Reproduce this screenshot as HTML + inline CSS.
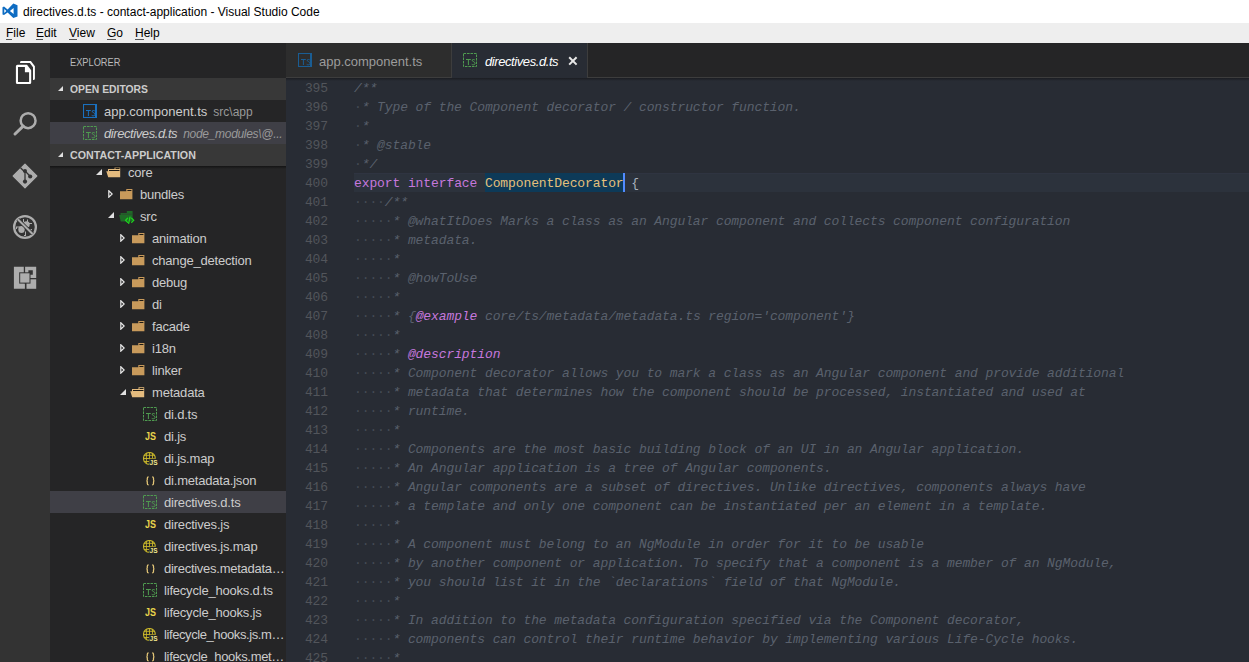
<!DOCTYPE html>
<html><head><meta charset="utf-8"><style>
*{margin:0;padding:0;box-sizing:border-box}
html,body{width:1249px;height:662px;overflow:hidden;background:#282c34;font-family:"Liberation Sans",sans-serif}
.abs{position:absolute}
#title{position:absolute;left:0;top:0;width:1249px;height:23px;background:#fff}
#title .t{position:absolute;left:23px;top:5px;font-size:12px;line-height:15px;color:#000;white-space:pre}
#menu{position:absolute;left:0;top:23px;width:1249px;height:20px;background:#eeeeee}
#menu span{position:absolute;top:3px;font-size:12px;line-height:15px;color:#000;white-space:pre}
#menu u{text-decoration:none}
#menu i{position:absolute;top:16px;height:1px;background:#555}
#act{position:absolute;left:0;top:43px;width:50px;height:619px;background:#333333}
#side{position:absolute;left:50px;top:43px;width:236px;height:619px;background:#252526;overflow:hidden}
#side .hdr{position:absolute;left:20px;top:13px;font-size:11px;color:#bbbbbb;transform:scaleX(0.84);transform-origin:0 0;white-space:pre}
.sec{position:absolute;left:0;width:236px;height:22px;background:#383838}
.sec .tri{position:absolute;left:7.6px;top:7.5px;width:0;height:0;border-left:5.6px solid transparent;border-bottom:5.6px solid #e0e0e0}
.sec .lbl{position:absolute;left:20px;top:5px;font-size:11px;font-weight:bold;color:#cccccc;transform:scaleX(0.94);transform-origin:0 0;white-space:pre}
.row{position:absolute;left:0;width:236px;height:22px;white-space:pre;overflow:hidden}
.row .nm{position:absolute;top:4px;font-size:13px;line-height:16px;color:#cccccc}
.row .ds{font-size:12px;color:#999999;margin-left:6px}
.sel{background:#3f3f46}
#tabs{position:absolute;left:286px;top:43px;width:963px;height:35px;background:#252526}
.tab{position:absolute;top:0;height:35px}
.tab .nm{position:absolute;top:11px;font-size:13px;line-height:16px;white-space:pre}
#ed{position:absolute;left:286px;top:78px;width:963px;height:584px;background:#282c34;overflow:hidden}
.num{position:absolute;left:0;width:42px;height:20px;padding-top:1px;text-align:right;font-family:"Liberation Mono",monospace;font-size:13px;line-height:19px;color:#52555b;letter-spacing:-0.1px}
.ln{position:absolute;left:68px;right:0;height:20px;padding-top:1px;font-family:"Liberation Mono",monospace;font-size:13px;line-height:19px;letter-spacing:-0.1px;white-space:pre;color:#abb2bf}
.cl{background:#2c323c;border-top:1px solid #2f3441}
.ws{color:#454b55}
.c{color:#5a616d;font-style:italic}
.k{color:#c678dd}
.hlt{color:#e5c07b}
.br{color:#abb2bf}
.tag{color:#c678dd;font-style:italic}
.cur{display:inline-block;width:2px;height:19px;background:#528bff;vertical-align:top;margin-left:-1px;margin-right:-1px}
#tree{position:absolute;left:0;top:123px;width:236px;height:496px;overflow:hidden}
.tn{white-space:nowrap}
.it{font-style:italic;letter-spacing:-0.42px}
.tn{letter-spacing:-0.2px}
#edshadow{position:absolute;left:286px;top:78px;width:963px;height:3px;background:linear-gradient(#1b1d22,rgba(40,44,52,0))}

</style></head><body>
<div id="title">
  <svg class="abs" style="left:0;top:0" width="22" height="22" viewBox="0 0 22 22"><path d="M13.3 3.6L17.5 5.3V16.5L13.3 18.1L7.6 12.6L4 15.1L2.5 14.4V7.2L4 6.6L7.6 9.4ZM13.6 7.9V14.1L9.9 11ZM4.3 8.9V13.1L6.3 11Z" fill="#0e6cc2" fill-rule="evenodd"/></svg>
  <div class="t">directives.d.ts - contact-application - Visual Studio Code</div>
</div>
<div id="menu">
  <span style="left:6px"><u>F</u>ile</span>
  <span style="left:36px"><u>E</u>dit</span>
  <span style="left:69px"><u>V</u>iew</span>
  <span style="left:107px"><u>G</u>o</span>
  <span style="left:135px"><u>H</u>elp</span>
  <i style="left:6px;width:6px"></i><i style="left:36px;width:7px"></i><i style="left:69px;width:8px"></i><i style="left:107px;width:9px"></i><i style="left:135px;width:9px"></i>
</div>
<div id="act"><svg class="abs" style="left:0;top:-43px" width="50" height="300" viewBox="0 0 50 300">
<path d="M17.5 64.8H27L31.2 70.2V82.6Q31.2 84.1 29.7 84.1H17.4Q15.9 84.1 15.9 82.6V66.3Q15.9 64.8 17.5 64.8ZM18 67V82H29.1V72.3H24.9V67Z" fill="#ffffff" fill-rule="evenodd"/>
<path d="M21 61H30.9L34.9 66.3V78.4Q34.9 79.9 33.4 79.9H33V67.2L29.9 63.1H20Q20 61 21 61Z" fill="#ffffff"/>
<circle cx="28.1" cy="120.7" r="7.45" fill="none" stroke="#adadad" stroke-width="2.5"/>
<path d="M23.2 126.1L15 134" stroke="#adadad" stroke-width="3" stroke-linecap="round"/>
<path d="M25 164.2L36.8 176L25 187.8L13.2 176Z" fill="#adadad" stroke="#adadad" stroke-width="1.2" stroke-linejoin="round"/>
<path d="M20.5 167.8L25 172.2V181.5M25 171L30.2 176.3" stroke="#333333" stroke-width="1.3" fill="none"/>
<circle cx="25" cy="171" r="2" fill="#333333"/><circle cx="30.2" cy="176.5" r="2.1" fill="#333333"/><circle cx="25" cy="181.6" r="2.1" fill="#333333"/>
<circle cx="25" cy="227" r="10.9" fill="none" stroke="#adadad" stroke-width="2.3"/>
<g fill="#adadad"><ellipse cx="21.5" cy="229.5" rx="3.2" ry="3.5"/><ellipse cx="26.5" cy="224.5" rx="3.2" ry="3.3"/>
<path d="M16 226.5H20.5V227.5H17V229H16ZM23 219H24V222.5H23ZM27 219.5H28V222H27ZM29 223H32V224H29ZM29 229H32V230.5H29ZM25 231.5H26V236H24V235H25Z"/></g>
<path d="M17.8 219.2L32.6 234" stroke="#333333" stroke-width="3.6"/>
<path d="M17.8 219.2L32.6 234" stroke="#adadad" stroke-width="2"/>
<path d="M13.9 266.8H23.8V283.2H24.9V288.8H13.9Z" fill="#adadad"/>
<path d="M25.1 266.8H36.2V278H25.1ZM28.4 270.3V274.7H32.8V270.3Z" fill="#adadad" fill-rule="evenodd"/>
<rect x="26.5" y="279.3" width="9.7" height="9.5" fill="#adadad"/>
<rect x="19.2" y="272.3" width="11.3" height="11.3" fill="#333333"/>
<rect x="20.2" y="273.3" width="9.3" height="9.3" fill="#adadad"/>
</svg></div>
<div id="side">
  <div class="hdr">EXPLORER</div>
  <div class="sec" style="top:35px"><div class="tri"></div><div class="lbl">OPEN EDITORS</div></div>
  <div class="row" style="top:57px"><svg class="abs" style="left:33px;top:4px" width="14" height="14" viewBox="0 0 14 14"><rect x="0.5" y="0.5" width="13" height="13" fill="none" stroke="#1a70be" stroke-width="1.1"/><rect x="12" y="1" width="1" height="12" fill="#1a70be"/><path d="M3 6.5H7.8M5.4 6.5V12" stroke="#1a70be" stroke-width="1" fill="none"/><path d="M11.9 7.1C11.3 6.4 9.6 6.2 9.1 7.1 8.5 8.3 12.2 8.7 12.1 10.3 12 12.2 9.4 12 8.7 11.3" stroke="#1a70be" stroke-width="1" fill="none"/></svg><span class="nm" style="left:54px">app.component.ts<span class="ds">src\app</span></span></div>
  <div class="row sel" style="top:79px"><svg class="abs" style="left:33px;top:4px" width="14" height="14" viewBox="0 0 14 14"><rect x="0.5" y="0.5" width="13" height="13" fill="none" stroke="#4f9b50" stroke-width="1" stroke-dasharray="2.6 0.9"/><path d="M3 6.5H7.8M5.4 6.5V12" stroke="#4f9b50" stroke-width="1" fill="none"/><path d="M11.9 7.1C11.3 6.4 9.6 6.2 9.1 7.1 8.5 8.3 12.2 8.7 12.1 10.3 12 12.2 9.4 12 8.7 11.3" stroke="#4f9b50" stroke-width="1" fill="none"/></svg><span class="nm" style="left:54px"><span class="it">directives.d.ts</span><span class="ds it" style="letter-spacing:-0.3px">node_modules\@...</span></span></div>
  <div class="sec" style="top:101px"><div class="tri"></div><div class="lbl" style="transform:scaleX(0.97)">CONTACT-APPLICATION</div></div>
  <div id="tree">
<div class="row" style="top:-5px"><svg class="abs" style="left:46px;top:7.6px" width="6" height="6" viewBox="0 0 6 6"><path d="M6 0V6H0Z" fill="#e0e0e0"/></svg><svg class="abs" style="left:56px;top:6px" width="15" height="11" viewBox="0 0 15 11"><path d="M2 2H8.5V0.2H14.2V10.3H2.2L0.3 4.3H2Z" fill="#e4bb7e"/><rect x="9.5" y="1" width="4" height="1" fill="#2a2418"/><rect x="3" y="3" width="10.5" height="1" fill="#1c1a16"/></svg><span class="nm tn" style="left:78px">core</span></div>
<div class="row" style="top:17px"><svg class="abs" style="left:58px;top:7px" width="5" height="8" viewBox="0 0 5 8"><path d="M0.8 0.8L4.2 4L0.8 7.2Z" fill="none" stroke="#e8e8e8" stroke-width="1.2"/></svg><svg class="abs" style="left:70px;top:6px" width="13" height="11" viewBox="0 0 13 11"><path d="M0 2.3H6.3V0H12.4V10.2H0Z" fill="#c89a5b"/><rect x="7.4" y="1" width="4" height="1" fill="#1e1a14"/></svg><span class="nm tn" style="left:90px">bundles</span></div>
<div class="row" style="top:39px"><svg class="abs" style="left:58px;top:7.3px" width="6" height="6" viewBox="0 0 6 6"><path d="M6 0V6H0Z" fill="#e0e0e0"/></svg><svg class="abs" style="left:68.6px;top:6px" width="17" height="14" viewBox="0 0 17 14"><path d="M1.6 1.9H7.8V0.1H13.6V10.6H1.8L0.1 3.9H1.6Z" fill="#1f6a27"/><rect x="2.5" y="2.7" width="10.4" height="0.9" fill="#2c4a2e"/><path d="M8.6 7.2L6.6 9.3L8.6 11.4M12.7 7.2L14.7 9.3L12.7 11.4M11 6.1L9.7 12.3" stroke="#1ed41e" stroke-width="1.3" fill="none" stroke-linecap="round"/></svg><span class="nm tn" style="left:90px">src</span></div>
<div class="row" style="top:61px"><svg class="abs" style="left:70px;top:7px" width="5" height="8" viewBox="0 0 5 8"><path d="M0.8 0.8L4.2 4L0.8 7.2Z" fill="none" stroke="#e8e8e8" stroke-width="1.2"/></svg><svg class="abs" style="left:82px;top:6px" width="13" height="11" viewBox="0 0 13 11"><path d="M0 2.3H6.3V0H12.4V10.2H0Z" fill="#c89a5b"/><rect x="7.4" y="1" width="4" height="1" fill="#1e1a14"/></svg><span class="nm tn" style="left:102px">animation</span></div>
<div class="row" style="top:83px"><svg class="abs" style="left:70px;top:7px" width="5" height="8" viewBox="0 0 5 8"><path d="M0.8 0.8L4.2 4L0.8 7.2Z" fill="none" stroke="#e8e8e8" stroke-width="1.2"/></svg><svg class="abs" style="left:82px;top:6px" width="13" height="11" viewBox="0 0 13 11"><path d="M0 2.3H6.3V0H12.4V10.2H0Z" fill="#c89a5b"/><rect x="7.4" y="1" width="4" height="1" fill="#1e1a14"/></svg><span class="nm tn" style="left:102px">change_detection</span></div>
<div class="row" style="top:105px"><svg class="abs" style="left:70px;top:7px" width="5" height="8" viewBox="0 0 5 8"><path d="M0.8 0.8L4.2 4L0.8 7.2Z" fill="none" stroke="#e8e8e8" stroke-width="1.2"/></svg><svg class="abs" style="left:82px;top:6px" width="13" height="11" viewBox="0 0 13 11"><path d="M0 2.3H6.3V0H12.4V10.2H0Z" fill="#c89a5b"/><rect x="7.4" y="1" width="4" height="1" fill="#1e1a14"/></svg><span class="nm tn" style="left:102px">debug</span></div>
<div class="row" style="top:127px"><svg class="abs" style="left:70px;top:7px" width="5" height="8" viewBox="0 0 5 8"><path d="M0.8 0.8L4.2 4L0.8 7.2Z" fill="none" stroke="#e8e8e8" stroke-width="1.2"/></svg><svg class="abs" style="left:82px;top:6px" width="13" height="11" viewBox="0 0 13 11"><path d="M0 2.3H6.3V0H12.4V10.2H0Z" fill="#c89a5b"/><rect x="7.4" y="1" width="4" height="1" fill="#1e1a14"/></svg><span class="nm tn" style="left:102px">di</span></div>
<div class="row" style="top:149px"><svg class="abs" style="left:70px;top:7px" width="5" height="8" viewBox="0 0 5 8"><path d="M0.8 0.8L4.2 4L0.8 7.2Z" fill="none" stroke="#e8e8e8" stroke-width="1.2"/></svg><svg class="abs" style="left:82px;top:6px" width="13" height="11" viewBox="0 0 13 11"><path d="M0 2.3H6.3V0H12.4V10.2H0Z" fill="#c89a5b"/><rect x="7.4" y="1" width="4" height="1" fill="#1e1a14"/></svg><span class="nm tn" style="left:102px">facade</span></div>
<div class="row" style="top:171px"><svg class="abs" style="left:70px;top:7px" width="5" height="8" viewBox="0 0 5 8"><path d="M0.8 0.8L4.2 4L0.8 7.2Z" fill="none" stroke="#e8e8e8" stroke-width="1.2"/></svg><svg class="abs" style="left:82px;top:6px" width="13" height="11" viewBox="0 0 13 11"><path d="M0 2.3H6.3V0H12.4V10.2H0Z" fill="#c89a5b"/><rect x="7.4" y="1" width="4" height="1" fill="#1e1a14"/></svg><span class="nm tn" style="left:102px">i18n</span></div>
<div class="row" style="top:193px"><svg class="abs" style="left:70px;top:7px" width="5" height="8" viewBox="0 0 5 8"><path d="M0.8 0.8L4.2 4L0.8 7.2Z" fill="none" stroke="#e8e8e8" stroke-width="1.2"/></svg><svg class="abs" style="left:82px;top:6px" width="13" height="11" viewBox="0 0 13 11"><path d="M0 2.3H6.3V0H12.4V10.2H0Z" fill="#c89a5b"/><rect x="7.4" y="1" width="4" height="1" fill="#1e1a14"/></svg><span class="nm tn" style="left:102px">linker</span></div>
<div class="row" style="top:215px"><svg class="abs" style="left:70px;top:7.6px" width="6" height="6" viewBox="0 0 6 6"><path d="M6 0V6H0Z" fill="#e0e0e0"/></svg><svg class="abs" style="left:80px;top:6px" width="15" height="11" viewBox="0 0 15 11"><path d="M2 2H8.5V0.2H14.2V10.3H2.2L0.3 4.3H2Z" fill="#e4bb7e"/><rect x="9.5" y="1" width="4" height="1" fill="#2a2418"/><rect x="3" y="3" width="10.5" height="1" fill="#1c1a16"/></svg><span class="nm tn" style="left:102px">metadata</span></div>
<div class="row" style="top:237px"><svg class="abs" style="left:93px;top:4px" width="14" height="14" viewBox="0 0 14 14"><rect x="0.5" y="0.5" width="13" height="13" fill="none" stroke="#4f9b50" stroke-width="1" stroke-dasharray="2.6 0.9"/><path d="M3 6.5H7.8M5.4 6.5V12" stroke="#4f9b50" stroke-width="1" fill="none"/><path d="M11.9 7.1C11.3 6.4 9.6 6.2 9.1 7.1 8.5 8.3 12.2 8.7 12.1 10.3 12 12.2 9.4 12 8.7 11.3" stroke="#4f9b50" stroke-width="1" fill="none"/></svg><span class="nm tn" style="left:114px">di.d.ts</span></div>
<div class="row" style="top:259px"><svg class="abs" style="left:94.8px;top:7px" width="12" height="8" viewBox="0 0 12 8"><text x="0" y="7.6" font-family="Liberation Sans" font-weight="bold" font-size="10.2" fill="#e9d44c" textLength="11" lengthAdjust="spacingAndGlyphs">JS</text></svg><span class="nm tn" style="left:114px">di.js</span></div>
<div class="row" style="top:281px"><svg class="abs" style="left:93.2px;top:5px" width="16" height="14" viewBox="0 0 16 14"><circle cx="6.4" cy="6.4" r="5.9" fill="none" stroke="#c9b72a" stroke-width="1.1"/><path d="M3.4 1.2V11.6M6.5 0.6V12.2M9.5 1.2V11.6M0.8 3.3H12M0.5 6.5H12.3M0.8 9.5H12" stroke="#c9b72a" stroke-width="0.9"/><rect x="6.2" y="6.8" width="9" height="7.2" rx="1" fill="#252526"/><text x="6.6" y="13.2" font-family="Liberation Sans" font-weight="bold" font-size="7.6" fill="#f3e88e" textLength="8" lengthAdjust="spacingAndGlyphs">JS</text></svg><span class="nm tn" style="left:114px">di.js.map</span></div>
<div class="row" style="top:303px"><svg class="abs" style="left:95.5px;top:7px" width="10" height="11" viewBox="0 0 10 11"><path d="M2.6 0.8Q1.3 0.8 1.3 2.2V3.6Q1.3 4.8 0.4 4.8Q1.3 4.8 1.3 6V7.4Q1.3 8.8 2.6 8.8M6.2 0.8Q7.5 0.8 7.5 2.2V3.6Q7.5 4.8 8.4 4.8Q7.5 4.8 7.5 6V7.4Q7.5 8.8 6.2 8.8" fill="none" stroke="#e6c878" stroke-width="1.25"/></svg><span class="nm tn" style="left:114px">di.metadata.json</span></div>
<div class="row sel" style="top:325px"><svg class="abs" style="left:93px;top:4px" width="14" height="14" viewBox="0 0 14 14"><rect x="0.5" y="0.5" width="13" height="13" fill="none" stroke="#4f9b50" stroke-width="1" stroke-dasharray="2.6 0.9"/><path d="M3 6.5H7.8M5.4 6.5V12" stroke="#4f9b50" stroke-width="1" fill="none"/><path d="M11.9 7.1C11.3 6.4 9.6 6.2 9.1 7.1 8.5 8.3 12.2 8.7 12.1 10.3 12 12.2 9.4 12 8.7 11.3" stroke="#4f9b50" stroke-width="1" fill="none"/></svg><span class="nm tn" style="left:114px">directives.d.ts</span></div>
<div class="row" style="top:347px"><svg class="abs" style="left:94.8px;top:7px" width="12" height="8" viewBox="0 0 12 8"><text x="0" y="7.6" font-family="Liberation Sans" font-weight="bold" font-size="10.2" fill="#e9d44c" textLength="11" lengthAdjust="spacingAndGlyphs">JS</text></svg><span class="nm tn" style="left:114px">directives.js</span></div>
<div class="row" style="top:369px"><svg class="abs" style="left:93.2px;top:5px" width="16" height="14" viewBox="0 0 16 14"><circle cx="6.4" cy="6.4" r="5.9" fill="none" stroke="#c9b72a" stroke-width="1.1"/><path d="M3.4 1.2V11.6M6.5 0.6V12.2M9.5 1.2V11.6M0.8 3.3H12M0.5 6.5H12.3M0.8 9.5H12" stroke="#c9b72a" stroke-width="0.9"/><rect x="6.2" y="6.8" width="9" height="7.2" rx="1" fill="#252526"/><text x="6.6" y="13.2" font-family="Liberation Sans" font-weight="bold" font-size="7.6" fill="#f3e88e" textLength="8" lengthAdjust="spacingAndGlyphs">JS</text></svg><span class="nm tn" style="left:114px">directives.js.map</span></div>
<div class="row" style="top:391px"><svg class="abs" style="left:95.5px;top:7px" width="10" height="11" viewBox="0 0 10 11"><path d="M2.6 0.8Q1.3 0.8 1.3 2.2V3.6Q1.3 4.8 0.4 4.8Q1.3 4.8 1.3 6V7.4Q1.3 8.8 2.6 8.8M6.2 0.8Q7.5 0.8 7.5 2.2V3.6Q7.5 4.8 8.4 4.8Q7.5 4.8 7.5 6V7.4Q7.5 8.8 6.2 8.8" fill="none" stroke="#e6c878" stroke-width="1.25"/></svg><span class="nm tn" style="left:114px;letter-spacing:-0.26px">directives.metadata…</span></div>
<div class="row" style="top:413px"><svg class="abs" style="left:93px;top:4px" width="14" height="14" viewBox="0 0 14 14"><rect x="0.5" y="0.5" width="13" height="13" fill="none" stroke="#4f9b50" stroke-width="1" stroke-dasharray="2.6 0.9"/><path d="M3 6.5H7.8M5.4 6.5V12" stroke="#4f9b50" stroke-width="1" fill="none"/><path d="M11.9 7.1C11.3 6.4 9.6 6.2 9.1 7.1 8.5 8.3 12.2 8.7 12.1 10.3 12 12.2 9.4 12 8.7 11.3" stroke="#4f9b50" stroke-width="1" fill="none"/></svg><span class="nm tn" style="left:114px">lifecycle_hooks.d.ts</span></div>
<div class="row" style="top:435px"><svg class="abs" style="left:94.8px;top:7px" width="12" height="8" viewBox="0 0 12 8"><text x="0" y="7.6" font-family="Liberation Sans" font-weight="bold" font-size="10.2" fill="#e9d44c" textLength="11" lengthAdjust="spacingAndGlyphs">JS</text></svg><span class="nm tn" style="left:114px">lifecycle_hooks.js</span></div>
<div class="row" style="top:457px"><svg class="abs" style="left:93.2px;top:5px" width="16" height="14" viewBox="0 0 16 14"><circle cx="6.4" cy="6.4" r="5.9" fill="none" stroke="#c9b72a" stroke-width="1.1"/><path d="M3.4 1.2V11.6M6.5 0.6V12.2M9.5 1.2V11.6M0.8 3.3H12M0.5 6.5H12.3M0.8 9.5H12" stroke="#c9b72a" stroke-width="0.9"/><rect x="6.2" y="6.8" width="9" height="7.2" rx="1" fill="#252526"/><text x="6.6" y="13.2" font-family="Liberation Sans" font-weight="bold" font-size="7.6" fill="#f3e88e" textLength="8" lengthAdjust="spacingAndGlyphs">JS</text></svg><span class="nm tn" style="left:114px;letter-spacing:-0.41px">lifecycle_hooks.js.m…</span></div>
<div class="row" style="top:479px"><svg class="abs" style="left:95.5px;top:7px" width="10" height="11" viewBox="0 0 10 11"><path d="M2.6 0.8Q1.3 0.8 1.3 2.2V3.6Q1.3 4.8 0.4 4.8Q1.3 4.8 1.3 6V7.4Q1.3 8.8 2.6 8.8M6.2 0.8Q7.5 0.8 7.5 2.2V3.6Q7.5 4.8 8.4 4.8Q7.5 4.8 7.5 6V7.4Q7.5 8.8 6.2 8.8" fill="none" stroke="#e6c878" stroke-width="1.25"/></svg><span class="nm tn" style="left:114px;letter-spacing:-0.32px">lifecycle_hooks.met…</span></div>
  </div>
  <div style="position:absolute;left:0;top:123px;width:236px;height:3px;background:linear-gradient(#141414,rgba(37,37,38,0))"></div>
</div>
<div id="tabs">
  <div class="tab" style="left:0;width:166px;background:#2d2d2d;border-right:1px solid #3d3d3d;border-bottom:1px solid #3d3d3d"><svg class="abs" style="left:12px;top:10px" width="14" height="14" viewBox="0 0 14 14"><rect x="0.5" y="0.5" width="13" height="13" fill="none" stroke="#1a5d93" stroke-width="1.1"/><rect x="12" y="1" width="1" height="12" fill="#1a5d93"/><path d="M3 6.5H7.8M5.4 6.5V12" stroke="#1a5d93" stroke-width="1" fill="none"/><path d="M11.9 7.1C11.3 6.4 9.6 6.2 9.1 7.1 8.5 8.3 12.2 8.7 12.1 10.3 12 12.2 9.4 12 8.7 11.3" stroke="#1a5d93" stroke-width="1" fill="none"/></svg><span class="nm" style="left:33px;color:#9c9c9c">app.component.ts</span></div>
  <div class="tab" style="left:166px;width:135px;background:#282c34"><svg class="abs" style="left:11px;top:10px" width="14" height="14" viewBox="0 0 14 14"><rect x="0.5" y="0.5" width="13" height="13" fill="none" stroke="#4f9b50" stroke-width="1" stroke-dasharray="2.6 0.9"/><path d="M3 6.5H7.8M5.4 6.5V12" stroke="#4f9b50" stroke-width="1" fill="none"/><path d="M11.9 7.1C11.3 6.4 9.6 6.2 9.1 7.1 8.5 8.3 12.2 8.7 12.1 10.3 12 12.2 9.4 12 8.7 11.3" stroke="#4f9b50" stroke-width="1" fill="none"/></svg><span class="nm it" style="left:33px;color:#ffffff">directives.d.ts</span><svg class="abs" style="left:116px;top:13px" width="10" height="10" viewBox="0 0 10 10"><path d="M1.2 1.2L8.6 8.6M8.6 1.2L1.2 8.6" stroke="#e8e8e8" stroke-width="2"/></svg></div>
  <div class="tab" style="left:301px;right:0;border-left:1px solid #3d3d3d;border-bottom:1px solid #3d3d3d"></div>
</div>
<div id="ed">
<div class="cl" style="position:absolute;left:68px;right:0;top:95px;height:19px"></div><div style="position:absolute;left:199px;top:95px;width:138.6px;height:19px;background:#0d3a58"></div>
<div class="num" style="top:0px">395</div>
<div class="ln" style="top:0px"><span class="c">/**</span></div>
<div class="num" style="top:19px">396</div>
<div class="ln" style="top:19px"><span class="ws">·</span><span class="c">* Type of the Component decorator / constructor function.</span></div>
<div class="num" style="top:38px">397</div>
<div class="ln" style="top:38px"><span class="ws">·</span><span class="c">*</span></div>
<div class="num" style="top:57px">398</div>
<div class="ln" style="top:57px"><span class="ws">·</span><span class="c">* @stable</span></div>
<div class="num" style="top:76px">399</div>
<div class="ln" style="top:76px"><span class="ws">·</span><span class="c">*/</span></div>
<div class="num" style="top:95px">400</div>
<div class="ln" style="top:95px"><span class="k">export</span><span class="p"> </span><span class="k">interface</span><span class="p"> </span><span class="hlt">ComponentDecorator</span><span class="p"> </span><span class="br">{</span></div>
<div class="num" style="top:114px">401</div>
<div class="ln" style="top:114px"><span class="ws">····</span><span class="c">/**</span></div>
<div class="num" style="top:133px">402</div>
<div class="ln" style="top:133px"><span class="ws">·····</span><span class="c">* @whatItDoes Marks a class as an Angular component and collects component configuration</span></div>
<div class="num" style="top:152px">403</div>
<div class="ln" style="top:152px"><span class="ws">·····</span><span class="c">* metadata.</span></div>
<div class="num" style="top:171px">404</div>
<div class="ln" style="top:171px"><span class="ws">·····</span><span class="c">*</span></div>
<div class="num" style="top:190px">405</div>
<div class="ln" style="top:190px"><span class="ws">·····</span><span class="c">* @howToUse</span></div>
<div class="num" style="top:209px">406</div>
<div class="ln" style="top:209px"><span class="ws">·····</span><span class="c">*</span></div>
<div class="num" style="top:228px">407</div>
<div class="ln" style="top:228px"><span class="ws">·····</span><span class="c">* {</span><span class="tag">@example</span><span class="c"> core/ts/metadata/metadata.ts region=&#x27;component&#x27;}</span></div>
<div class="num" style="top:247px">408</div>
<div class="ln" style="top:247px"><span class="ws">·····</span><span class="c">*</span></div>
<div class="num" style="top:266px">409</div>
<div class="ln" style="top:266px"><span class="ws">·····</span><span class="c">* </span><span class="tag">@description</span></div>
<div class="num" style="top:285px">410</div>
<div class="ln" style="top:285px"><span class="ws">·····</span><span class="c">* Component decorator allows you to mark a class as an Angular component and provide additional</span></div>
<div class="num" style="top:304px">411</div>
<div class="ln" style="top:304px"><span class="ws">·····</span><span class="c">* metadata that determines how the component should be processed, instantiated and used at</span></div>
<div class="num" style="top:323px">412</div>
<div class="ln" style="top:323px"><span class="ws">·····</span><span class="c">* runtime.</span></div>
<div class="num" style="top:342px">413</div>
<div class="ln" style="top:342px"><span class="ws">·····</span><span class="c">*</span></div>
<div class="num" style="top:361px">414</div>
<div class="ln" style="top:361px"><span class="ws">·····</span><span class="c">* Components are the most basic building block of an UI in an Angular application.</span></div>
<div class="num" style="top:380px">415</div>
<div class="ln" style="top:380px"><span class="ws">·····</span><span class="c">* An Angular application is a tree of Angular components.</span></div>
<div class="num" style="top:399px">416</div>
<div class="ln" style="top:399px"><span class="ws">·····</span><span class="c">* Angular components are a subset of directives. Unlike directives, components always have</span></div>
<div class="num" style="top:418px">417</div>
<div class="ln" style="top:418px"><span class="ws">·····</span><span class="c">* a template and only one component can be instantiated per an element in a template.</span></div>
<div class="num" style="top:437px">418</div>
<div class="ln" style="top:437px"><span class="ws">·····</span><span class="c">*</span></div>
<div class="num" style="top:456px">419</div>
<div class="ln" style="top:456px"><span class="ws">·····</span><span class="c">* A component must belong to an NgModule in order for it to be usable</span></div>
<div class="num" style="top:475px">420</div>
<div class="ln" style="top:475px"><span class="ws">·····</span><span class="c">* by another component or application. To specify that a component is a member of an NgModule,</span></div>
<div class="num" style="top:494px">421</div>
<div class="ln" style="top:494px"><span class="ws">·····</span><span class="c">* you should list it in the `declarations` field of that NgModule.</span></div>
<div class="num" style="top:513px">422</div>
<div class="ln" style="top:513px"><span class="ws">·····</span><span class="c">*</span></div>
<div class="num" style="top:532px">423</div>
<div class="ln" style="top:532px"><span class="ws">·····</span><span class="c">* In addition to the metadata configuration specified via the Component decorator,</span></div>
<div class="num" style="top:551px">424</div>
<div class="ln" style="top:551px"><span class="ws">·····</span><span class="c">* components can control their runtime behavior by implementing various Life-Cycle hooks.</span></div>
<div class="num" style="top:570px">425</div>
<div class="ln" style="top:570px"><span class="ws">·····</span><span class="c">*</span></div>
<div style="position:absolute;left:337px;top:95px;width:2px;height:19px;background:#528bff"></div>
</div>
<div id="edshadow"></div>

</body></html>
